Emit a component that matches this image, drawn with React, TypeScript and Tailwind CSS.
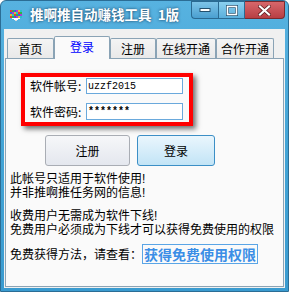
import React from 'react';

const cjk = "font-['Noto_Sans_CJK_SC','Microsoft_YaHei',sans-serif]";

const tabs = [
  { label: '首页', w: 'w-[47px]', active: false },
  { label: '登录', w: 'w-[56px]', active: true },
  { label: '注册', w: 'w-[46px]', active: false },
  { label: '在线开通', w: 'w-[60px]', active: false },
  { label: '合作开通', w: 'w-[58px]', active: false },
];

// little colourful monitor icon in the title bar
const AppIcon = () => {
  const cols = ['#e23b3b', '#2fb34a', '#3a5de0', '#b03ad0', '#e0c22f', '#2ac2c8'];
  const cells = [];
  for (let y = 0; y < 4; y++) {
    for (let x = 0; x < 6; x++) {
      cells.push(
        <rect key={`${x}-${y}`} x={x * 2} y={y * 2} width="2" height="2" fill={cols[(x + y * 2) % cols.length]} />
      );
    }
  }
  return (
    <svg width="12" height="11" viewBox="0 0 12 11" shapeRendering="crispEdges">
      <rect x="0" y="0" width="12" height="8" fill="#222" />
      {cells}
      <rect x="2" y="8" width="8" height="1" fill="#fff" />
      <rect x="4" y="9" width="4" height="1" fill="#fff" />
      <rect x="5" y="10" width="2" height="1" fill="#ddd" />
    </svg>
  );
};

const MinIcon = () => (
  <svg width="12" height="6" viewBox="0 0 12 6">
    <rect x="1" y="1.5" width="10" height="3" fill="#fff" stroke="#23506e" strokeWidth="1" />
  </svg>
);

const MaxIcon = () => (
  <svg width="12" height="11" viewBox="0 0 12 11">
    <rect x="1.5" y="1.5" width="9" height="8" fill="none" stroke="#23506e" strokeWidth="3" />
    <rect x="1.5" y="1.5" width="9" height="8" fill="none" stroke="#fff" strokeWidth="1.6" />
  </svg>
);

const CloseIcon = () => (
  <svg width="13" height="11" viewBox="0 0 13 11">
    <path d="M2 1.5 L11 9.5 M11 1.5 L2 9.5" stroke="#5a1a1e" strokeWidth="3.6" strokeLinecap="square" />
    <path d="M2 1.5 L11 9.5 M11 1.5 L2 9.5" stroke="#fff" strokeWidth="2.2" strokeLinecap="square" />
  </svg>
);

export default function App() {
  return (
    <div className={`w-[289px] h-[292px] flex flex-col border border-[#2b6d95] rounded-t-[6px] overflow-hidden bg-gradient-to-b from-[#57b2e0] via-[#42a4d6] to-[#3a9bd0] ${cjk}`}>
      {/* title bar */}
      <div className="h-[28px] shrink-0 flex items-start">
        <div className="h-[28px] flex items-center pl-[9px] gap-[8px]">
          <AppIcon />
          <span className="text-white font-bold text-[13.5px] leading-none whitespace-pre [text-shadow:0_0_3px_rgba(10,40,70,0.9)]">
            推啊推自动赚钱工具  1版
          </span>
        </div>
        <div className="ml-auto mr-[3px] flex h-[18px]">
          <div className="w-[27px] h-[18px] flex items-center justify-center border border-[#2a6a92] border-r-0 rounded-bl-[4px] bg-gradient-to-b from-[#7cc4e8] to-[#4a9fd0]">
            <MinIcon />
          </div>
          <div className="w-[27px] h-[18px] flex items-center justify-center border border-[#2a6a92] bg-gradient-to-b from-[#8ad0ef] to-[#5aafdc]">
            <MaxIcon />
          </div>
          <div className="w-[40px] h-[18px] flex items-center justify-center border border-[#7a2a2e] border-l-0 rounded-br-[4px] bg-gradient-to-b from-[#d7676b] to-[#b83e44]">
            <CloseIcon />
          </div>
        </div>
      </div>

      {/* client area */}
      <div className="mx-[3px] h-[259px] bg-[#f0f0f0] pt-[7px] px-[1px] pb-[1px] flex flex-col">
        <div className="flex items-end pl-[2px]">
          {tabs.map((t) =>
            t.active ? (
              <div
                key={t.label}
                className={`${t.w} h-[23px] -mb-px relative z-10 flex items-center justify-center border border-b-0 border-[#8aa3b5] rounded-t-[2px] bg-[#fafafa] text-[12px] text-[#0000ff] pb-[2px]`}
              >
                {t.label}
              </div>
            ) : (
              <div
                key={t.label}
                className={`${t.w} h-[20px] flex items-center justify-center border border-b-0 border-[#8aa3b5] rounded-t-[2px] bg-gradient-to-b from-[#f4f4f4] to-[#e9e9e9] text-[12px] text-black`}
              >
                {t.label}
              </div>
            )
          )}
        </div>

        <div className="flex-1 border border-[#8aa3b5] bg-[#fafafa] flex flex-col">
          {/* account box */}
          <div className="ml-[15px] mt-[14px] w-[172px] border-4 border-[#ff0000] shadow-[3px_3px_5px_rgba(0,0,0,0.55)] flex flex-col gap-[9px] pl-[5px] pt-[1px] pb-[2px]">
            <div className="flex items-center h-[16px]">
              <span className="w-[56px] text-[12px] text-black">软件帐号:</span>
              <div className="w-[97px] h-[16px] border border-[#6aa9dc] bg-white flex items-center pl-[1px] font-['Liberation_Mono',monospace] text-[10px] text-black">
                uzzf2015
              </div>
            </div>
            <div className="flex items-center h-[17px]">
              <span className="w-[56px] text-[12px] text-black">软件密码:</span>
              <div className="w-[97px] h-[17px] border border-[#6aa9dc] bg-white flex items-center pl-[1px] font-['Liberation_Mono',monospace] text-[10px] font-bold text-black">
                *******
              </div>
            </div>
          </div>

          {/* buttons */}
          <div className="flex gap-[7px] ml-[39px] mt-[9px]">
            <button className="w-[85px] h-[31px] rounded-[3px] border border-[#a9adb4] bg-gradient-to-b from-[#f6f7f9] to-[#e4e7ee] text-[12px] text-black">
              注册
            </button>
            <button className="w-[78px] h-[31px] rounded-[3px] border border-[#3c8fc6] bg-gradient-to-b from-[#eaf6fd] to-[#c2e4f6] text-[12px] text-black">
              登录
            </button>
          </div>

          {/* info text */}
          <div className="ml-[4px] mt-[6px] text-[12px] leading-[14px] text-black font-['Liberation_Sans','Noto_Sans_CJK_SC',sans-serif]">
            <p>此帐号只适用于软件使用!</p>
            <p>并非推啊推任务网的信息!</p>
            <p className="mt-[9px]">收费用户无需成为软件下线!</p>
            <p>免费用户必须成为下线才可以获得免费使用的权限</p>
          </div>

          <div className="ml-[4px] mt-[7px] flex items-center h-[20px]">
            <span className="text-[12px] text-black">免费获得方法，请查看：</span>
            <span className="h-[20px] px-[1px] border border-[#5aa5e6] flex items-center text-[14px] font-bold text-[#3b8ee6]">
              获得免费使用权限
            </span>
          </div>
        </div>
      </div>
    </div>
  );
}
